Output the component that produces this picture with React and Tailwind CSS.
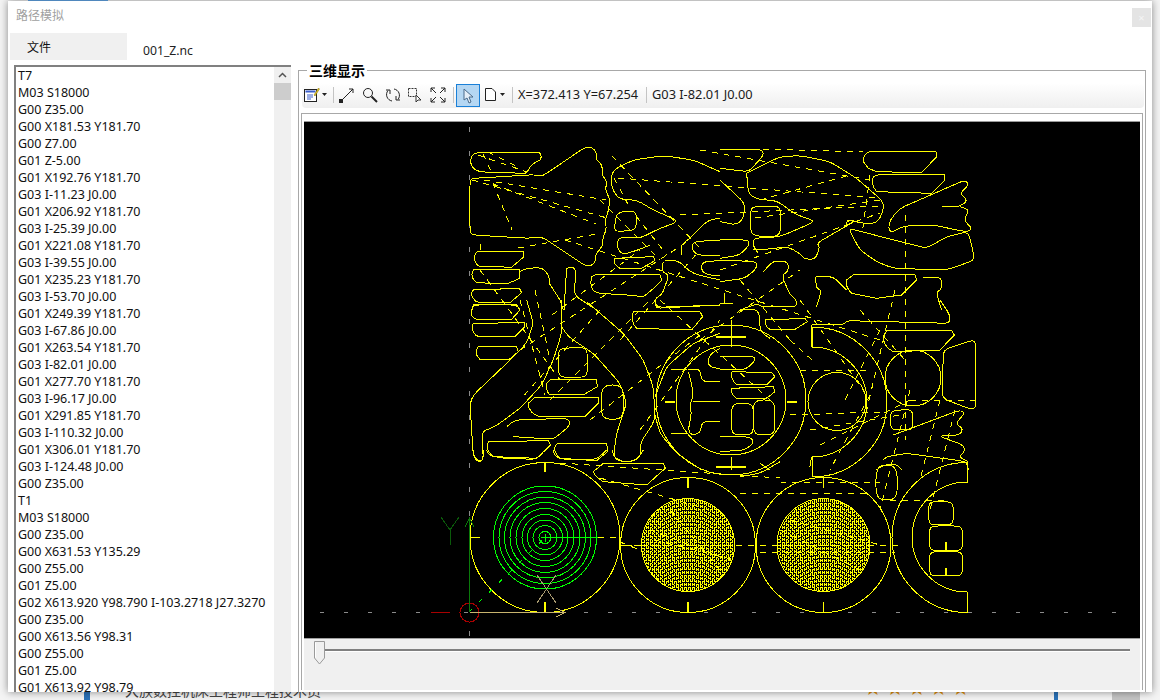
import React from 'react';

const gcode = [
  'T7', 'M03 S18000', 'G00 Z35.00', 'G00 X181.53 Y181.70', 'G00 Z7.00', 'G01 Z-5.00',
  'G01 X192.76 Y181.70', 'G03 I-11.23 J0.00', 'G01 X206.92 Y181.70', 'G03 I-25.39 J0.00',
  'G01 X221.08 Y181.70', 'G03 I-39.55 J0.00', 'G01 X235.23 Y181.70', 'G03 I-53.70 J0.00',
  'G01 X249.39 Y181.70', 'G03 I-67.86 J0.00', 'G01 X263.54 Y181.70', 'G03 I-82.01 J0.00',
  'G01 X277.70 Y181.70', 'G03 I-96.17 J0.00', 'G01 X291.85 Y181.70', 'G03 I-110.32 J0.00',
  'G01 X306.01 Y181.70', 'G03 I-124.48 J0.00', 'G00 Z35.00', 'T1', 'M03 S18000', 'G00 Z35.00',
  'G00 X631.53 Y135.29', 'G00 Z55.00', 'G01 Z5.00', 'G02 X613.920 Y98.790 I-103.2718 J27.3270',
  'G00 Z35.00', 'G00 X613.56 Y98.31', 'G00 Z55.00', 'G01 Z5.00', 'G01 X613.92 Y98.79',
];

// outlines traced from the part layout, each block in local crop coordinates (1/3 px)
const solidBlocks = [
  {
    at: [460, 140],
    d: [
      'M32 65 Q32 40 55 38 L238 38 Q248 48 240 60 Q215 70 205 90 L195 100 L75 96 Q35 95 32 65',
      'M40 115 L30 120 L30 275 L38 285 L210 295 L245 290 L380 380 L405 372 L408 338 L430 318 L428 290 L440 270 L435 240 L445 215 L450 175 L435 150 L442 125 L425 105 L428 75 L408 60 L410 35 L395 22 L375 22 L245 110 L225 104 Z',
      'M780 95 L700 60 L610 47 L520 60 L460 90 L452 120 L460 155 L480 178 L530 180 L580 210 L645 238 L648 248 L600 265 L540 295 L480 290 L468 315 L485 345 L540 328 L570 315',
      'M470 218 L520 212 L530 225 L528 270 L470 275 L463 265 Z',
      'M50 335 L190 335 L192 350 L155 382 L55 378 Q35 360 50 335',
      'M40 390 L180 388 L180 415 L140 432 L50 428 Q28 410 40 390',
      'M40 450 L178 445 L185 458 L150 488 L50 486 Q25 465 40 450',
      'M35 510 L40 495 L170 495 L180 510',
      'M395 410 Q385 455 420 460 L500 465 L550 470 Q590 440 605 420 L600 405 L410 403 Z',
      'M465 355 L580 350 L585 362 L545 385 L480 385 Q455 370 465 355',
      'M180 395 Q205 380 245 385 Q270 400 268 430 L300 480 L310 510',
      'M320 385 L340 380 L348 395 L342 465 L410 510',
      'M320 385 L312 510',
      'M615 362 L655 362 L690 395 L715 405 L780 420',
      'M610 365 L605 395 L628 405 L605 465 L585 475 L585 505 L780 495',
      'M780 300 L700 305 L695 325 L710 345 L780 348',
      'M780 362 L730 365 L722 385 L735 403 L780 408',
      'M665 345 L662 315 L690 295 L745 240 L780 235',
    ],
  },
  {
    at: [720, 140],
    d: [
      'M0 28 L125 28 L132 45 L100 80 L85 95 L0 85',
      'M450 35 L648 35 L650 50 L605 98 L470 95 L445 85 L430 65 Q430 40 450 35',
      'M480 103 L672 103 L675 120 L635 160 L470 155 Q450 130 460 110 Z',
      'M80 100 L180 50 L240 47 L330 65 L410 115 L490 185 L490 215 L470 250 L430 250 L380 240',
      'M80 100 L85 160 L110 178 L170 182 L230 225 L278 240 L278 248 L180 290 L100 295 L100 320 L115 340',
      'M100 200 L172 198 L182 210 L182 275 L170 290 L105 288 L92 275 L92 210 Z',
      'M665 200 L720 200 L745 180 L718 160 L748 135 L735 120 L540 205 L510 240 L505 265 L515 278 L550 258 L640 255 L720 272 L745 275 L757 265 L730 240 L750 210 L720 200',
      'M385 265 L620 325 L680 290 L745 275 L765 360 L680 390 L520 385 L470 365 L420 330 Z',
      'M380 420 L400 405 L585 405 L590 420 L545 465 L470 475 L395 460 Q375 440 380 420',
      'M288 410 L340 410 L380 450',
      'M288 410 L288 445 L305 450 L290 500',
      'M610 412 L665 412 L665 450 L648 455 L665 510',
      'M0 120 L75 190 L70 235 L50 255 L0 245',
      'M380 260 L380 242 L410 240 L290 310 L300 320 L285 360 L250 355 L245 345 L205 320 L120 330 L100 330',
      'M130 395 L160 362 L205 365 L205 395 L185 405 L210 465 L230 480 L230 500 L120 500 L115 490 L60 510',
      'M0 360 L110 365 L110 385 L75 415 L0 425',
      'M0 300 L85 300 L88 315 L60 345 L0 355',
      'M15 460 L15 490 M0 490 L40 490',
    ],
  },
  {
    at: [460, 300],
    d: [
      'M35 35 L40 15 L170 15 L180 30 L155 58 L50 58 Q30 50 35 35',
      'M40 70 L195 68 L195 80 L165 110 L50 108 Q30 90 40 70',
      'M55 140 L170 140 L175 155 L145 180 L60 178 Q40 160 55 140',
      'M200 0 L220 70 L200 130 L140 190 L40 285 L30 310 L40 470 L60 485 L70 478 L65 395 L105 380 L180 325 L245 255 L280 180 L305 100 L305 0',
      'M305 80 L325 110 L400 160 L480 250 L500 310 L470 400 L460 470 L480 485 L520 485 L545 465 L540 430 L580 370 L585 345 L580 260 L550 180 L490 100 L380 5',
      'M585 345 L600 400 L650 460 L725 510',
      'M585 290 L620 200 L700 130 L780 100',
      'M305 145 L372 142 L382 155 L382 222 L370 232 L305 232 L295 220 L295 155 Z',
      'M260 250 L270 240 L410 240 L412 260 L370 285 L270 285 Q255 270 260 250',
      'M205 310 L225 292 L415 292 L415 310 L375 350 L240 350 Q205 340 205 310',
      'M140 380 L165 360 L325 355 L332 375 L280 418 L160 410',
      'M85 425 L265 422 L272 435 L230 475 L100 470 Q75 450 85 425',
      'M290 432 L440 430 L443 455 L410 482 L300 475 Q275 450 290 432',
      'M440 255 L475 255 L490 270 L490 345 L475 358 L440 358 L425 345 L425 270 Z',
      'M520 35 L720 35 L728 50 L695 90 L530 85 Q510 65 520 35',
      'M585 0 L590 22 L780 15',
      'M780 145 Q745 160 745 185 Q745 205 780 205',
      'M632 210 L680 210 M632 400 L680 400',
      'M685 210 L720 205 L725 245 L780 245',
      'M700 305 L780 305',
      'M780 365 L725 365 L722 400 L690 405 L685 385 L695 340 L690 310 L700 290 L695 250 L685 215',
    ],
  },
  {
    at: [720, 300],
    d: [
      'M0 170 L100 168 L108 180 L75 210 L0 208',
      'M35 215 L155 218 L165 230 L140 255 L50 255 Q30 235 35 215',
      'M35 265 L160 260 L165 275 L140 295 L50 295 Q30 280 35 265',
      'M48 310 L88 310 L100 322 L100 395 L88 405 L48 405 L35 395 L35 322 Z',
      'M112 300 L152 300 L165 315 L165 392 L152 405 L112 405 L100 392 L100 315 Z',
      'M0 410 L85 410 L105 425 L75 450 L0 455',
      'M50 40 L60 28 L110 28 L120 50 L120 95 L150 115',
      'M135 60 L255 55 L262 65 L225 88 L150 88 Q135 80 135 60',
      'M275 75 L370 75 L380 62 L690 70 L690 45 L660 0',
      'M275 75 L275 140',
      'M490 110 L500 92 L695 92 L703 105 L660 150 L520 155 Q490 140 490 110',
      'M670 150 L760 120 L767 130 L767 325 L750 327 L667 295 Z',
      'M520 332 L570 328 L578 338 L578 382 L570 390 L520 390 L512 380 L512 340 Z',
      'M490 480 L500 470 L560 460 L740 485 L745 510',
      'M520 405 L720 330 L735 340 L705 372 L730 385 L720 405 L655 408 L730 435 L735 455 L715 470 L745 485',
      'M470 510 L490 495 L530 492 L545 510',
      'M120 490 L150 510 M270 500 L275 470',
    ],
  },
  {
    at: [430, 450],
    d: [
      'M130 0 L132 25 L150 37 L160 25 L160 0',
      'M170 0 L175 15 L220 25 L320 28 L345 0',
      'M370 0 L375 20 L410 30 L500 28 L530 0',
      'M548 0 L550 20 L580 37 L620 30 L640 0',
      'M490 65 L520 40 L700 40 L706 55 L650 105 L520 95 Q495 80 490 65',
    ],
  },
  {
    at: [740, 460],
    d: [
      'M408 40 L420 15 L460 15 L472 40 L472 100 L460 120 L420 120 L408 100 Z',
      'M575 125 L630 125 L640 135 L640 185 L630 195 L575 195 L566 185 L566 135 Z',
      'M578 198 L658 198 L668 208 L668 262 L658 272 L578 272 L568 262 L568 208 Z',
      'M578 275 L658 275 L668 285 L668 338 L658 348 L578 348 L568 338 L568 285 Z',
      'M0 50 L60 40 L120 5',
    ],
  },
];

const dashBlocks = [
  'M478 155 L527 172 M483 154 L492 173 M472 178 L606 200 M472 180 L607 218 M493 183 L512 230 M493 184 L596 224',
  'M518 248 L597 234 M480 250 L480 240 M618 178 L880 198 M614 178 L630 208 M636 216 L667 255 M552 315 L640 250',
  'M488 152 L520 168 M600 200 L660 260 M720 270 L880 213 M680 215 L880 206 M612 156 L700 248',
  'M763 149 L863 152 M700 150 L870 180 M760 200 L850 175 M755 218 L880 200 M870 175 L862 235',
  'M905 215 L905 400 M895 290 L862 430 M880 330 L845 400 M870 395 L830 470 M905 400 L905 440',
  'M565 240 L880 340 M520 350 L690 240 M600 310 L520 400 M620 340 L700 250 M550 400 L650 300 M660 300 L770 400',
  'M590 420 L700 335 M640 430 L720 320 M700 340 L800 270 M480 270 L560 380 M520 300 L545 395',
  'M535 290 L550 360 M740 280 L790 340 M790 340 L812 360 M800 300 L870 400 M860 310 L905 360',
  'M800 370 L868 370 M790 415 L880 412 M820 445 L910 400 M810 430 L900 415 M910 400 L975 400',
  'M560 463 L780 478 M600 478 L700 507 M780 482 L880 483 M890 500 L950 500 M740 493 L870 493',
  'M598 537 L622 537 M622 545 L640 545 M640 545 L900 545 M620 542 L640 550 M760 552 L895 552',
  'M650 530 L730 560 M790 520 L880 545 M910 390 L880 510 M940 400 L920 480 M955 410 L930 510',
  'M670 510 L720 570 M655 540 L735 560 M780 530 L860 570',
];

// rounds the vertices of a straight-line outline, leaves curved ones alone
const rounded = (d, r = 18) => {
  if (!/^M[\d\s.LZ-]+$/.test(d) || /M.*M/.test(d)) return d;
  const closed = d.trim().endsWith('Z');
  const nums = d.match(/-?[\d.]+/g).map(Number);
  const pts = [];
  for (let i = 0; i < nums.length; i += 2) pts.push([nums[i], nums[i + 1]]);
  if (pts.length < 3) return d;
  const towards = (a, b, dist) => {
    const len = Math.hypot(b[0] - a[0], b[1] - a[1]) || 1;
    const t = Math.min(dist, len / 2) / len;
    return [a[0] + (b[0] - a[0]) * t, a[1] + (b[1] - a[1]) * t];
  };
  const n = pts.length;
  if (closed) {
    const start = towards(pts[0], pts[1], r);
    let out = `M${start[0]} ${start[1]}`;
    for (let i = 1; i <= n; i++) {
      const p = pts[i % n];
      const a = towards(p, pts[i - 1], r);
      const b = towards(p, pts[(i + 1) % n], r);
      out += ` L${a[0]} ${a[1]} Q${p[0]} ${p[1]} ${b[0]} ${b[1]}`;
    }
    return out + ' Z';
  }
  let out = `M${pts[0][0]} ${pts[0][1]}`;
  for (let i = 1; i < n - 1; i++) {
    const a = towards(pts[i], pts[i - 1], r);
    const b = towards(pts[i], pts[i + 1], r);
    out += ` L${a[0]} ${a[1]} Q${pts[i][0]} ${pts[i][1]} ${b[0]} ${b[1]}`;
  }
  return out + ` L${pts[n - 1][0]} ${pts[n - 1][1]}`;
};

const hatch = (cx, cy, r) => {
  let d = '';
  for (let x = -r; x <= r; x += 2) {
    const h = Math.sqrt(r * r - x * x);
    d += `M${cx + x + 0.5} ${Math.round(cy - h)} V${Math.round(cy + h)} `;
  }
  return d;
};

const hatchRows = (cx, cy, r) => {
  let d = '';
  for (let y = -r + 4; y < r; y += 3) {
    const w = Math.sqrt(r * r - y * y);
    d += `M${Math.round(cx - w)} ${cy + y + 0.5} H${Math.round(cx + w)} `;
  }
  return d;
};

const greenRings = [6, 12, 17.5, 23, 29, 35, 40.5, 46, 51.5];

function Toolpath() {
  return (
    <svg viewBox="304 122 836 516" className="w-[836px] h-[516px] block" fill="none" shapeRendering="crispEdges">
      <rect x="304" y="122" width="836" height="516" fill="#000" />
      {/* grid axes */}
      <path d="M469.5 122 V638" stroke="#8a8a8a" strokeDasharray="5 19" strokeDashoffset="-5" />
      <path d="M320 612.5 H1130" stroke="#8a8a8a" strokeDasharray="4 20" />
      <g stroke="#ffff00">
        {solidBlocks.map((b, i) => (
          <g key={i} transform={`translate(${b.at[0]} ${b.at[1]}) scale(0.3333)`}>
            {b.d.map((d, j) => <path key={j} d={rounded(d)} vectorEffect="non-scaling-stroke" />)}
          </g>
        ))}
        {dashBlocks.map((d, i) => <path key={i} d={d} strokeDasharray="6 6" />)}
        <circle cx="545" cy="537.5" r="75" />
        <circle cx="688" cy="545" r="67.5" />
        <circle cx="823.5" cy="545" r="67.5" />
        <circle cx="731" cy="400" r="75" />
        <circle cx="731" cy="400" r="55" />
        <circle cx="837" cy="401.5" r="29" />
        <circle cx="913" cy="378" r="28" />
        <path d="M812 327 A75 75 0 0 1 812 477 L812 457 A55 55 0 0 0 812 347 Z" />
        <path d="M967 462.5 A75 75 0 0 0 967 612.5 L967 592 A55 55 0 0 1 967 482 Z" />
        <circle cx="688" cy="545" r="46.5" />
        <circle cx="823.5" cy="545" r="46.5" />
        <path d={hatch(688, 545, 46)} strokeDasharray="3 1" />
        <path d={hatch(824, 545, 46)} strokeDasharray="3 1" />
        <path d={hatchRows(688, 545, 46)} strokeDasharray="2 2" />
        <path d={hatchRows(824, 545, 46)} strokeDasharray="2 2" />
        {/* tab marks */}
        <path strokeWidth="2" d="M545 462 V472 M545 602 V612 M688 478 V488 M688 602 V612 M716 337 H746 M716 467 H746 M665 401.5 H675 M787 401.5 H797 M946 542 V551 M946 568 V576" />
        <path d="M470 537 H480 M731 320 V347 M731 457 V470 M823 477 V488 M823 602 V612 M621 545 H632" />
      </g>
      <g stroke="#00ff00">
        {greenRings.map((r) => <circle key={r} cx="545" cy="537.5" r={r} />)}
        <path d="M545 537.5 H598 M541 537.5 H549 M545 533.5 V541.5" />
        <path d="M469 612 L545 537.5" strokeDasharray="4 10" />
      </g>
      {/* origin triad */}
      <path d="M431 612.5 H450" stroke="#a80000" />
      <circle cx="469.5" cy="612.5" r="9.5" stroke="#a80000" />
      <path d="M469.5 612 V518 M465 527 L469.5 518 L474 527" stroke="#0a7a0a" />
      <path d="M441 517 L450 530 L459 517 M450 530 V545" stroke="#0a5a0a" />
      <path d="M469.5 612.5 H565 M556 608 L565 612.5 L556 617" stroke="#c8b46e" />
      <path d="M537 575 L556 603 M556 575 L537 603" stroke="#a89a70" />
    </svg>
  );
}

const Caret = () => (
  <svg width="5" height="3" viewBox="0 0 5 3" className="shrink-0"><path d="M0 0 H5 L2.5 3 Z" fill="#222" /></svg>
);
const Sep = () => <div className="w-px h-[16px] bg-[#c4c4c4] shrink-0" />;

function Toolbar() {
  return (
    <div className="h-[25px] flex items-center ml-[3px] mr-px mt-[3px] pl-[2px] pb-[2px] bg-gradient-to-b from-white to-[#efefef] rounded-sm text-[12.8px] text-[#1a1a1a]">
      <svg width="16" height="16" viewBox="0 0 16 16" className="shrink-0">
        <rect x="0.5" y="2.5" width="12" height="12" fill="#fff" stroke="#222" />
        <rect x="1.5" y="3.5" width="10" height="2" fill="#3a5fcd" />
        <path d="M3 8 H9 M3 10 H9 M3 12 H7" stroke="#3a5fcd" />
        <path d="M10 8 L14.5 1 L15.5 2 L11 9 Z" fill="#e8c820" stroke="#7a6a10" strokeWidth="0.5" />
      </svg>
      <div className="ml-[2px]"><Caret /></div>
      <div className="ml-[6px]"><Sep /></div>
      <svg width="16" height="16" viewBox="0 0 16 16" className="ml-[5px] shrink-0" fill="none" stroke="#222">
        <path d="M2 14 L14 2 M10 2 H14 V6" />
        <rect x="0.5" y="12.5" width="3" height="3" fill="#222" />
      </svg>
      <svg width="16" height="16" viewBox="0 0 16 16" className="ml-[7px] shrink-0" fill="none" stroke="#222">
        <circle cx="6" cy="6" r="4.5" />
        <path d="M9.5 9.5 L15 15" strokeWidth="2" />
      </svg>
      <svg width="16" height="16" viewBox="0 0 16 16" className="ml-[7px] shrink-0" fill="none" stroke="#222">
        <path d="M9 2 A6.5 6.5 0 0 1 13 12.5 M7 14 A6.5 6.5 0 0 1 3 3.5" />
        <path d="M1 3 H5 V7 M15 13 H11 V9" />
      </svg>
      <svg width="14" height="16" viewBox="0 0 14 16" className="ml-[7px] shrink-0" fill="none" stroke="#333">
        <rect x="0.5" y="1.5" width="8" height="8" strokeDasharray="2 1" />
        <path d="M8 8 L8 15 L10 13 L13 13 Z" fill="#fff" />
      </svg>
      <svg width="16" height="16" viewBox="0 0 16 16" className="ml-[8px] shrink-0" fill="none" stroke="#222">
        <path d="M1 1 L6 6 M15 1 L10 6 M1 15 L6 10 M15 15 L10 10 M1 5 V1 H5 M11 1 H15 V5 M1 11 V15 H5 M11 15 H15 V11" />
      </svg>
      <div className="ml-[7px]"><Sep /></div>
      <div className="ml-[2px] w-[24px] h-[23px] mt-[2px] flex items-center justify-center bg-[#b5d7f3] border border-[#1a80d8] shrink-0">
        <svg width="11" height="16" viewBox="0 0 11 16">
          <path d="M1 1 L1 12 L4 10 L6 15 L8 14 L6 9 L10 9 Z" fill="#e4eef8" stroke="#4a6a8a" />
        </svg>
      </div>
      <svg width="11" height="13" viewBox="0 0 11 13" className="ml-[5px] shrink-0" fill="#fff" stroke="#222">
        <path d="M0.5 0.5 H7 L10.5 4 V12.5 H0.5 Z" />
      </svg>
      <div className="ml-[4px]"><Caret /></div>
      <div className="ml-[7px]"><Sep /></div>
      <span className="ml-[5px] whitespace-nowrap w-[128px]">X=372.413 Y=67.254</span>
      <Sep />
      <span className="ml-[5px] whitespace-nowrap">G03 I-82.01 J0.00</span>
    </div>
  );
}

export default function App() {
  return (
    <div className="relative w-[1160px] h-[700px] overflow-hidden bg-[#f4f4f4]" style={{ fontFamily: '"Noto Sans", "Noto Sans CJK SC", sans-serif' }}>
      {/* page behind the dialog */}
      <div className="w-[80px] h-px ml-[28px] bg-[#64aaee]" />
      <div className="absolute left-[84px] top-[680px] w-[6px] h-[20px] bg-[#2a72b8]" />
      <div className="absolute left-[125px] top-[680px] text-[14px] text-[#444] whitespace-nowrap">大族数控机床工程师工程技术员</div>
      <div className="absolute left-[864px] top-[678px] flex gap-[4px] text-[20px] leading-[20px] text-[#e0900c]" style={{ fontFamily: '"DejaVu Sans", sans-serif' }}>
        <span>★</span><span>★</span><span>★</span><span>★</span><span>★</span>
      </div>
      <div className="absolute left-[1054px] top-[680px] w-[4px] h-[20px] bg-[#2a72b8]" />
      <div className="absolute left-[1112px] top-[680px] w-[28px] h-[20px] bg-[#c4c4c4]" />

      {/* dialog */}
      <div className="absolute left-[8px] top-[1px] w-[1144px] h-[691px] bg-white shadow-[0_0_8px_rgba(0,0,0,0.45)] flex flex-col">
        <div className="h-[32px] flex justify-between shrink-0">
          <div className="pl-[8px] pt-[6px] text-[12px] leading-[18px] text-[#a0a0a0]">路径模拟</div>
          <div className="w-[19px] h-[19px] mt-[7px] mr-px bg-[#e4e4e4] flex items-center justify-center text-[#f4f4f4] text-[11px] leading-none">×</div>
        </div>

        <div className="h-[27px] flex shrink-0 pl-[2px]">
          <div className="w-[117px] bg-[#f0f0f0] pl-[17px] pt-[5px] text-[12px] leading-[20px] text-[#111]">文件</div>
          <div className="pl-[16px] pt-[9px] text-[12.2px] leading-[18px] text-[#222]">001_Z.nc</div>
        </div>

        <div className="flex-1 min-h-0 flex pl-[6px] pt-[5px]">
          <div className="w-[277px] h-[627px] flex border-t-2 border-l-2 border-[#808080] mb-[-3px]">
            <div className="flex-1 overflow-hidden pl-[2px] text-[12.5px] leading-[17px] text-[#111] bg-white">
              {gcode.map((line, i) => <div key={i} className="h-[17px] whitespace-nowrap">{line}</div>)}
            </div>
            <div className="w-[17px] bg-[#f0f0f0] shrink-0">
              <div className="h-[16px] flex items-center justify-center">
                <svg width="9" height="6" viewBox="0 0 9 6" fill="none" stroke="#555" strokeWidth="1.5"><path d="M1 5 L4.5 1.5 L8 5" /></svg>
              </div>
              <div className="h-[17px] bg-[#cdcdcd]" />
            </div>
          </div>

          <div className="relative ml-[7px] mt-[5px] w-[848px] h-[622px] border-t border-l border-r border-[#a8a8a8]">
            <div className="absolute left-[8px] top-[-8px] px-[2px] bg-white text-[14px] leading-[15px] font-bold text-black">三维显示</div>
            <div className="pt-[9px]">
              <Toolbar />
              <div className="ml-[2px] mr-[2px] mt-[5px] h-[577px] border-t border-l border-r border-[#a8a8a8] pt-[7px] pl-[2px] pr-[2px]">
                <div className="border-t border-[#9a9a9a]">
                  <Toolpath />
                </div>
                <div className="relative h-[52px] bg-[#f0f0f0] border-t border-[#a0a0a0]">
                  <div className="absolute left-[14px] right-[10px] top-[10px] h-[2px] bg-[#808080] border-b border-white box-content" />
                  <svg width="11" height="24" viewBox="0 0 11 24" className="absolute left-[10px] top-[2px]">
                    <path d="M0.5 0.5 H10.5 V17 L5.5 23 L0.5 17 Z" fill="#f0f0f0" stroke="#9a9a9a" />
                    <path d="M1.5 1.5 V16.5" stroke="#fff" />
                  </svg>
                </div>
              </div>
            </div>
          </div>
        </div>
      </div>
    </div>
  );
}
